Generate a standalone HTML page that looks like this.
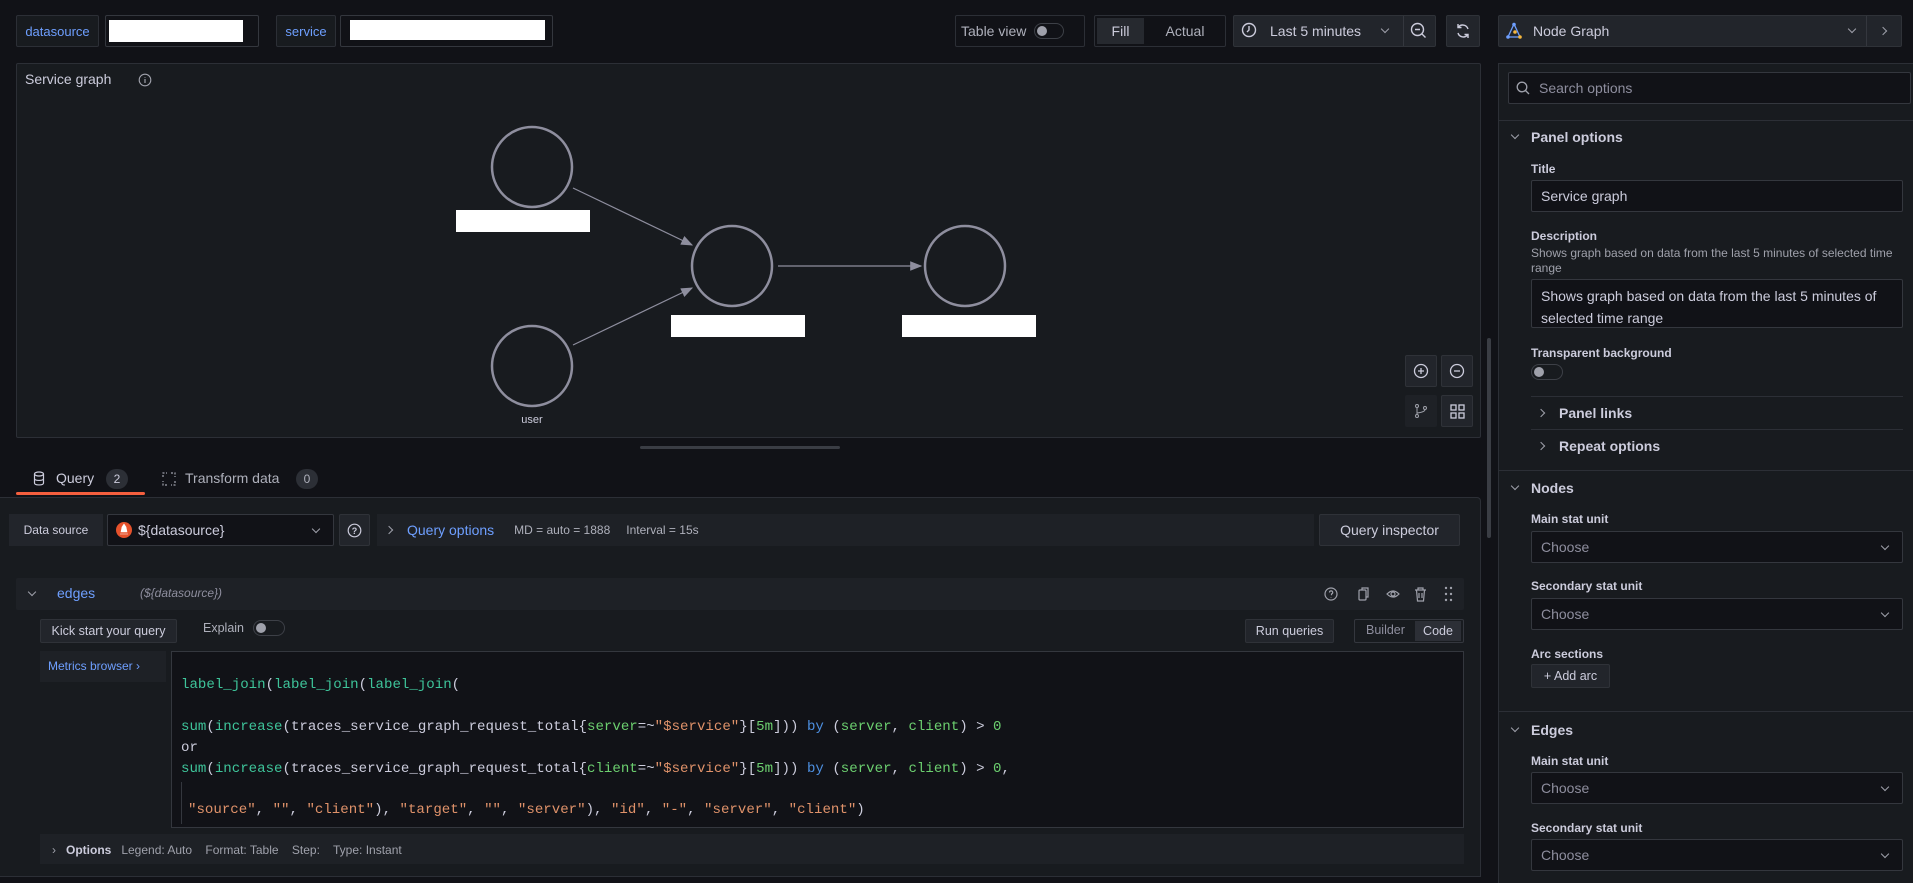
<!DOCTYPE html>
<html><head><meta charset="utf-8"><style>
*{box-sizing:border-box;margin:0;padding:0}
body{width:1913px;height:861px;background:#111217;font-family:"Liberation Sans",sans-serif;font-size:14px;color:#ccccdc;position:relative;overflow:hidden}
.a{position:absolute}
.box{position:absolute;border:1px solid #2c2f36;border-radius:2px;background:#181b1f}
.btn{position:absolute;background:#22252b;border:1px solid #2f3238;border-radius:2px;color:#ccccdc;font-weight:500;display:flex;align-items:center;justify-content:center}
.inp{position:absolute;background:#111217;border:1px solid #34373e;border-radius:2px;padding-left:9px;display:flex;align-items:center}
.wr{position:absolute;background:#fff}
.lbl{position:absolute;font-size:12px;font-weight:bold;color:#ccccdc}
.sec{position:absolute;font-weight:bold;font-size:14px;color:#ccccdc}
.ln{position:absolute;height:1px;background:#2c2f36}
.mono{font-family:"Liberation Mono",monospace;font-size:14.1px;position:absolute;white-space:pre}
.g{color:#3ec49a}.gr{color:#6ccf6f}.o{color:#e0926a}.b{color:#4d8fe0}.w{color:#ccccdc}
.cd{position:absolute;width:6px;height:6px;border-right:1.3px solid #9fa1ab;border-bottom:1.3px solid #9fa1ab;transform:rotate(45deg)}
.cr{position:absolute;width:6px;height:6px;border-right:1.3px solid #9fa1ab;border-bottom:1.3px solid #9fa1ab;transform:rotate(-45deg)}
svg{position:absolute}
</style></head><body>
<!-- top bar -->
<div class="box" style="left:16px;top:15px;width:83px;height:32px;color:#6e9fff;display:flex;align-items:center;justify-content:center;font-size:13px">datasource</div>
<div class="inp" style="left:105px;top:15px;width:154px;height:32px"></div>
<div class="wr" style="left:109px;top:20px;width:134px;height:22px"></div>
<div class="box" style="left:276px;top:15px;width:60px;height:32px;color:#6e9fff;display:flex;align-items:center;justify-content:center;font-size:13px">service</div>
<div class="inp" style="left:340px;top:15px;width:213px;height:32px"></div>
<div class="wr" style="left:350px;top:20px;width:195px;height:20px"></div>

<div class="box" style="left:955px;top:15px;width:130px;height:32px;background:#111217;display:flex;align-items:center;padding-left:5px;color:#aeb0bb">Table view<div style="margin-left:8px;width:30px;height:16px;border:1px solid #3d4047;border-radius:8px;position:relative"><div style="position:absolute;left:2px;top:2px;width:10px;height:10px;border-radius:50%;background:#9fa1ab"></div></div></div>
<div class="box" style="left:1094px;top:15px;width:132px;height:32px;background:#111217"></div>
<div class="a" style="left:1097px;top:18px;width:47px;height:26px;background:#26292f;display:flex;align-items:center;justify-content:center">Fill</div>
<div class="a" style="left:1150px;top:18px;width:70px;height:26px;display:flex;align-items:center;justify-content:center;color:#aeb0bb">Actual</div>
<div class="btn" style="left:1233px;top:15px;width:203px;height:32px;justify-content:flex-start;padding-left:36px">Last 5 minutes</div>
<div class="cd" style="left:1382px;top:26px"></div>
<svg style="left:1241px;top:22px" width="16" height="16" viewBox="0 0 16 16"><circle cx="8" cy="8" r="6.5" fill="none" stroke="#ccccdc" stroke-width="1.4"/><path d="M8 4v4l-2 2" stroke="#ccccdc" stroke-width="1.4" fill="none"/></svg>
<div class="a" style="left:1403px;top:16px;width:1px;height:30px;background:#34373e"></div>
<svg style="left:1410px;top:22px" width="17" height="17" viewBox="0 0 17 17"><circle cx="7.5" cy="7.5" r="6" fill="none" stroke="#ccccdc" stroke-width="1.4"/><path d="M5 7.5h5M12 12l3.5 3.5" stroke="#ccccdc" stroke-width="1.4"/></svg>
<div class="btn" style="left:1446px;top:15px;width:34px;height:32px"></div>
<svg style="left:1455px;top:23px" width="16" height="16" viewBox="0 0 16 16"><path d="M13 6A5.5 5.5 0 0 0 3.5 4M3 10a5.5 5.5 0 0 0 9.5 2M3 1v3.5h3.5M13 15v-3.5H9.5" fill="none" stroke="#ccccdc" stroke-width="1.4"/></svg>
<div class="btn" style="left:1498px;top:15px;width:404px;height:32px;justify-content:flex-start;padding-left:34px">Node Graph</div>
<svg style="left:1505px;top:22px" width="18" height="18" viewBox="0 0 18 18"><path d="M9 2L3 15h12z" fill="none" stroke="#6e9fff" stroke-width="1.3"/><circle cx="9" cy="2.5" r="1.8" fill="#6e9fff"/><circle cx="3" cy="15" r="1.8" fill="#6e9fff"/><circle cx="15" cy="15" r="1.8" fill="#f5b73d"/><circle cx="10" cy="10" r="1.8" fill="#f5b73d"/></svg>
<div class="cd" style="left:1849px;top:26px"></div>
<div class="a" style="left:1866px;top:16px;width:1px;height:30px;background:#34373e"></div>
<div class="cr" style="left:1880px;top:28px"></div>

<!-- panel -->
<div class="box" style="left:16px;top:63px;width:1465px;height:375px"></div>
<div class="a" style="left:25px;top:71px;font-weight:500;font-size:14px">Service graph</div>
<svg style="left:138px;top:73px" width="14" height="14" viewBox="0 0 14 14"><circle cx="7" cy="7" r="5.8" fill="none" stroke="#9fa1ab" stroke-width="1.1"/><path d="M7 6v4M7 4v.6" stroke="#9fa1ab" stroke-width="1.2"/></svg>
<svg style="left:0;top:0" width="1100" height="450">
<defs><marker id="m" markerWidth="10" markerHeight="8" refX="9" refY="4" orient="auto"><path d="M0 0L10 4L0 8z" fill="#8e8e9e"/></marker></defs>
<g fill="none" stroke="#8e8e9e" stroke-width="2.5"><circle cx="532" cy="167" r="40"/><circle cx="732" cy="266" r="40"/><circle cx="965" cy="266" r="40"/><circle cx="532" cy="366" r="40"/></g>
<g stroke="#8e8e9e" stroke-width="1.2"><line x1="573" y1="188" x2="692" y2="245" marker-end="url(#m)"/><line x1="778" y1="266" x2="921" y2="266" marker-end="url(#m)"/><line x1="573" y1="345" x2="692" y2="288" marker-end="url(#m)"/></g>
<text x="532" y="423" fill="#ccccdc" font-size="11" text-anchor="middle" font-family="Liberation Sans">user</text>
</svg>
<div class="wr" style="left:456px;top:210px;width:134px;height:22px"></div>
<div class="wr" style="left:671px;top:315px;width:134px;height:22px"></div>
<div class="wr" style="left:902px;top:315px;width:134px;height:22px"></div>
<div class="btn" style="left:1405px;top:355px;width:32px;height:32px"><svg style="position:static" width="16" height="16" viewBox="0 0 16 16"><circle cx="8" cy="8" r="6.5" fill="none" stroke="#ccccdc" stroke-width="1.3"/><path d="M5 8h6M8 5v6" stroke="#ccccdc" stroke-width="1.3"/></svg></div>
<div class="btn" style="left:1441px;top:355px;width:32px;height:32px"><svg style="position:static" width="16" height="16" viewBox="0 0 16 16"><circle cx="8" cy="8" r="6.5" fill="none" stroke="#ccccdc" stroke-width="1.3"/><path d="M5 8h6" stroke="#ccccdc" stroke-width="1.3"/></svg></div>
<div class="a" style="left:1405px;top:395px;width:32px;height:32px;background:#1e2126;border-radius:2px"><svg style="left:9px;top:8px" width="14" height="16" viewBox="0 0 14 16"><circle cx="3" cy="3" r="1.5" fill="none" stroke="#9fa1ab"/><circle cx="3" cy="13" r="1.5" fill="none" stroke="#9fa1ab"/><circle cx="11" cy="5" r="1.5" fill="none" stroke="#9fa1ab"/><path d="M3 4.5v7M11 6.5Q11 9 3 10" fill="none" stroke="#9fa1ab"/></svg></div>
<div class="btn" style="left:1441px;top:395px;width:32px;height:32px"><svg style="position:static" width="15" height="15" viewBox="0 0 15 15"><g fill="none" stroke="#ccccdc" stroke-width="1.3"><rect x="1" y="1" width="5" height="5"/><rect x="9" y="1" width="5" height="5"/><rect x="1" y="9" width="5" height="5"/><rect x="9" y="9" width="5" height="5"/></g></svg></div>
<div class="a" style="left:640px;top:446px;width:200px;height:3px;background:#3a3d44;border-radius:2px"></div>
<div class="a" style="left:1487px;top:338px;width:4px;height:200px;background:#3a3d44;border-radius:2px"></div>

<!-- tabs -->
<svg style="left:33px;top:471px" width="12" height="15" viewBox="0 0 12 15"><g fill="none" stroke="#ccccdc" stroke-width="1.2"><ellipse cx="6" cy="3" rx="4.5" ry="2"/><path d="M1.5 3v9c0 2.6 9 2.6 9 0V3M1.5 7.5c0 2.6 9 2.6 9 0"/></g></svg>
<div class="a" style="left:56px;top:470px;font-size:14px">Query</div>
<div class="a" style="left:106px;top:469px;width:22px;height:20px;border-radius:10px;background:#2c2f36;font-size:12px;display:flex;align-items:center;justify-content:center">2</div>
<svg style="left:162px;top:472px" width="14" height="14" viewBox="0 0 14 14"><path d="M1 5V1h4M9 1h4v4M13 9v4H9M5 13H1V9" fill="none" stroke="#9fa1ab" stroke-width="1.2" stroke-dasharray="2 1.5"/></svg>
<div class="a" style="left:185px;top:470px;color:#aeb0bb">Transform data</div>
<div class="a" style="left:296px;top:469px;width:22px;height:20px;border-radius:10px;background:#2c2f36;font-size:12px;display:flex;align-items:center;justify-content:center;color:#aeb0bb">0</div>
<div class="a" style="left:16px;top:492px;width:129px;height:3px;background:#f55f3e;border-radius:2px"></div>
<div class="box" style="left:0;top:497px;width:1481px;height:380px;border-radius:0 4px 0 0;border-left:none"></div>

<div class="a" style="left:9px;top:514px;width:94px;height:32px;background:#22252b;font-size:12px;font-weight:500;display:flex;align-items:center;justify-content:center">Data source</div>
<div class="inp" style="left:107px;top:514px;width:227px;height:32px;padding-left:8px">
<svg style="position:static" width="16" height="18" viewBox="0 0 16 18"><circle cx="8" cy="9" r="8" fill="#e6522c"/><path d="M4 13h8M5 11h6L10 6 8 3 6 6z" fill="#fff" stroke="#fff" stroke-width=".6"/></svg><span style="margin-left:6px">${datasource}</span><span class="cd" style="right:14px;top:11px"></span></div>
<div class="btn" style="left:339px;top:514px;width:31px;height:32px"><svg style="position:static" width="15" height="15" viewBox="0 0 15 15"><circle cx="7.5" cy="7.5" r="6.3" fill="none" stroke="#ccccdc" stroke-width="1.2"/><text x="7.5" y="11" font-size="9" text-anchor="middle" fill="#ccccdc" font-family="Liberation Sans" font-weight="bold">?</text></svg></div>
<div class="a" style="left:377px;top:514px;width:937px;height:32px;background:#1e2126;display:flex;align-items:center;padding-left:30px"><span style="color:#6e9fff;font-size:14px">Query options</span><span style="color:#aeb0bb;margin-left:20px;font-size:12px">MD = auto = 1888</span><span style="color:#aeb0bb;margin-left:16px;font-size:12px">Interval = 15s</span></div>
<div class="cr" style="left:386px;top:527px"></div>
<div class="btn" style="left:1319px;top:514px;width:141px;height:32px;font-size:14px">Query inspector</div>

<div class="a" style="left:16px;top:578px;width:1448px;height:32px;background:#1e2126;border-radius:2px"></div>
<div class="cd" style="left:29px;top:589px"></div>
<div class="a" style="left:57px;top:585px;color:#6e9fff;font-size:14px;font-weight:500">edges</div>
<div class="a" style="left:140px;top:586px;color:#8e8e9e;font-size:12px;font-style:italic">(${datasource})</div>
<svg style="left:1323px;top:585px" width="130" height="18" viewBox="0 0 130 18"><g fill="none" stroke="#9fa1ab" stroke-width="1.2"><circle cx="8" cy="9" r="6"/><path d="M6.5 7.5a1.6 1.6 0 1 1 2 1.5v1.3M8 12v.5"/><rect x="36" y="5" width="7" height="10" rx="1"/><path d="M39 5V3h6v9h-2"/><path d="M64 9q6-6 12 0q-6 6-12 0z"/><circle cx="70" cy="9" r="2"/><path d="M92 5h11M95 5V3h5v2M93.5 5l1 11h6l1-11M96 8v5M99 8v5"/></g><g fill="#9fa1ab"><circle cx="123" cy="3" r="1.2"/><circle cx="128" cy="3" r="1.2"/><circle cx="123" cy="9" r="1.2"/><circle cx="128" cy="9" r="1.2"/><circle cx="123" cy="15" r="1.2"/><circle cx="128" cy="15" r="1.2"/></g></svg>

<div class="btn" style="left:40px;top:619px;width:137px;height:24px;font-size:12.5px">Kick start your query</div>
<div class="a" style="left:203px;top:621px;color:#aeb0bb;font-size:12.5px">Explain</div>
<div class="a" style="left:253px;top:620px;width:32px;height:16px;border:1px solid #3d4047;border-radius:8px"><div style="position:absolute;left:2px;top:2px;width:10px;height:10px;border-radius:50%;background:#9fa1ab"></div></div>
<div class="btn" style="left:1245px;top:619px;width:89px;height:24px;font-size:12.5px">Run queries</div>
<div class="a" style="left:1354px;top:619px;width:110px;height:24px;border:1px solid #34373e;border-radius:2px"></div>
<div class="a" style="left:1366px;top:623px;color:#8e8e9e;font-size:12.5px">Builder</div>
<div class="a" style="left:1415px;top:621px;width:46px;height:20px;background:#2c2f36;font-size:12.5px;display:flex;align-items:center;justify-content:center">Code</div>

<div class="a" style="left:40px;top:651px;width:126px;height:31px;background:#1e2126;color:#6e9fff;font-size:12px;padding:8px 0 0 8px">Metrics browser ›</div>
<div class="a" style="left:171px;top:651px;width:1293px;height:177px;background:#111217;border:1px solid #34373e"></div>
<div class="mono" style="left:181px;top:677px"><span class="g">label_join</span><span class="w">(</span><span class="g">label_join</span><span class="w">(</span><span class="g">label_join</span><span class="w">(</span></div>
<div class="mono" style="left:181px;top:719px"><span class="g">sum</span><span class="w">(</span><span class="g">increase</span><span class="w">(traces_service_graph_request_total{</span><span class="gr">server</span><span class="w">=~</span><span class="o">"$service"</span><span class="w">}[</span><span class="gr">5m</span><span class="w">])) </span><span class="b">by</span><span class="w"> (</span><span class="gr">server</span><span class="w">, </span><span class="gr">client</span><span class="w">) &gt; </span><span class="gr">0</span></div>
<div class="mono w" style="left:181px;top:740px">or</div>
<div class="mono" style="left:181px;top:761px"><span class="g">sum</span><span class="w">(</span><span class="g">increase</span><span class="w">(traces_service_graph_request_total{</span><span class="gr">client</span><span class="w">=~</span><span class="o">"$service"</span><span class="w">}[</span><span class="gr">5m</span><span class="w">])) </span><span class="b">by</span><span class="w"> (</span><span class="gr">server</span><span class="w">, </span><span class="gr">client</span><span class="w">) &gt; </span><span class="gr">0</span><span class="w">,</span></div>
<div class="a" style="left:181px;top:782px;width:1px;height:42px;background:#34373e"></div>
<div class="mono" style="left:188px;top:802px"><span class="o">"source"</span><span class="w">, </span><span class="o">""</span><span class="w">, </span><span class="o">"client"</span><span class="w">), </span><span class="o">"target"</span><span class="w">, </span><span class="o">""</span><span class="w">, </span><span class="o">"server"</span><span class="w">), </span><span class="o">"id"</span><span class="w">, </span><span class="o">"-"</span><span class="w">, </span><span class="o">"server"</span><span class="w">, </span><span class="o">"client"</span><span class="w">)</span></div>
<div class="a" style="left:40px;top:834px;width:1424px;height:30px;background:#1e2126;font-size:12px;padding:9px 0 0 12px;color:#9fa1ab;white-space:pre">›   <b style="color:#ccccdc">Options</b>   Legend: Auto    Format: Table    Step:    Type: Instant</div>

<!-- right options pane -->
<div class="a" style="left:1498px;top:63px;width:415px;height:820px;background:#181b1f;border-left:1px solid #2c2f36;border-top:1px solid #2c2f36"></div>
<div class="inp" style="left:1508px;top:72px;width:403px;height:32px;padding-left:30px;color:#8e8e9e">Search options</div>
<svg style="left:1516px;top:81px" width="14" height="14" viewBox="0 0 14 14"><circle cx="6" cy="6" r="4.8" fill="none" stroke="#9fa1ab" stroke-width="1.3"/><path d="M9.5 9.5L13 13" stroke="#9fa1ab" stroke-width="1.3"/></svg>
<div class="ln" style="left:1499px;top:120px;width:414px"></div>
<div class="cd" style="left:1512px;top:132px"></div>
<div class="sec" style="left:1531px;top:129px">Panel options</div>
<div class="lbl" style="left:1531px;top:162px">Title</div>
<div class="inp" style="left:1531px;top:180px;width:372px;height:32px">Service graph</div>
<div class="lbl" style="left:1531px;top:229px">Description</div>
<div class="a" style="left:1531px;top:246px;font-size:12px;color:#9fa1ab;width:380px;line-height:15px">Shows graph based on data from the last 5 minutes of selected time range</div>
<div class="inp" style="left:1531px;top:279px;width:372px;height:49px;align-items:flex-start;padding-top:5px;line-height:22px">Shows graph based on data from the last 5 minutes of selected time range</div>
<div class="lbl" style="left:1531px;top:346px">Transparent background</div>
<div class="a" style="left:1531px;top:364px;width:32px;height:16px;border:1px solid #3d4047;border-radius:8px"><div style="position:absolute;left:2px;top:2px;width:10px;height:10px;border-radius:50%;background:#9fa1ab"></div></div>
<div class="ln" style="left:1531px;top:396px;width:372px"></div>
<div class="cr" style="left:1538px;top:410px"></div>
<div class="sec" style="left:1559px;top:405px">Panel links</div>
<div class="ln" style="left:1531px;top:429px;width:372px"></div>
<div class="cr" style="left:1538px;top:443px"></div>
<div class="sec" style="left:1559px;top:438px">Repeat options</div>
<div class="ln" style="left:1499px;top:470px;width:414px"></div>
<div class="cd" style="left:1512px;top:483px"></div>
<div class="sec" style="left:1531px;top:480px">Nodes</div>
<div class="lbl" style="left:1531px;top:512px">Main stat unit</div>
<div class="inp" style="left:1531px;top:531px;width:372px;height:32px;color:#8e8e9e">Choose<span class="cd" style="right:14px;top:11px"></span></div>
<div class="lbl" style="left:1531px;top:579px">Secondary stat unit</div>
<div class="inp" style="left:1531px;top:598px;width:372px;height:32px;color:#8e8e9e">Choose<span class="cd" style="right:14px;top:11px"></span></div>
<div class="lbl" style="left:1531px;top:647px">Arc sections</div>
<div class="btn" style="left:1531px;top:664px;width:79px;height:24px;font-size:12.5px;font-weight:normal">+ Add arc</div>
<div class="ln" style="left:1499px;top:711px;width:414px"></div>
<div class="cd" style="left:1512px;top:725px"></div>
<div class="sec" style="left:1531px;top:722px">Edges</div>
<div class="lbl" style="left:1531px;top:754px">Main stat unit</div>
<div class="inp" style="left:1531px;top:772px;width:372px;height:32px;color:#8e8e9e">Choose<span class="cd" style="right:14px;top:11px"></span></div>
<div class="lbl" style="left:1531px;top:821px">Secondary stat unit</div>
<div class="inp" style="left:1531px;top:839px;width:372px;height:32px;color:#8e8e9e">Choose<span class="cd" style="right:14px;top:11px"></span></div>
</body></html>
